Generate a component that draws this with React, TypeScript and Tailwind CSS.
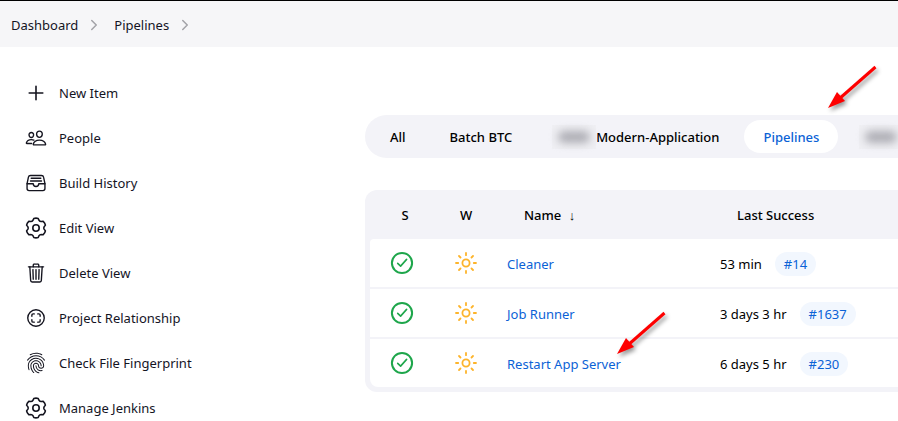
import type { ReactNode } from "react";
import clsx from "clsx";
import {
  IoChevronForward,
  IoFileTrayFullOutline,
  IoFingerPrintOutline,
  IoPeopleOutline,
  IoScanCircleOutline,
  IoTrashOutline,
} from "react-icons/io5";

type IconProps = { className?: string };

function PlusIcon({ className }: IconProps) {
  return (
    <svg viewBox="0 0 22 22" aria-hidden="true" className={className}>
      <path
        d="M11 4.200V17.800M4.200 11H17.800"
        stroke="currentColor"
        strokeWidth="1.600"
        strokeLinecap="round"
      />
    </svg>
  );
}

function GearIcon({ className }: IconProps) {
  return (
    <svg
      viewBox="1 1 22 22"
      aria-hidden="true"
      className={className}
      fill="none"
      stroke="currentColor"
      strokeWidth="1.600"
      strokeLinejoin="round"
    >
      <path d="M9.800 2.500Q12 1.800 14.200 2.500L15 4.300Q15.800 5.500 17.100 5.500L19.200 5.300Q21 6.900 21.400 9.100L20.100 10.900Q19.600 12 20.100 13.100L21.400 14.900Q21 17.100 19.200 18.700L17.100 18.500Q15.800 18.500 15 19.700L14.200 21.500Q12 22.200 9.800 21.500L9 19.700Q8.200 18.500 6.900 18.500L4.800 18.700Q3 17.100 2.600 14.900L3.900 13.100Q4.400 12 3.900 10.900L2.600 9.100Q3 6.900 4.800 5.300L6.900 5.500Q8.200 5.500 9 4.300Z" />
      <circle cx="12" cy="12" r="3.200" />
    </svg>
  );
}

const crumbs = ["Dashboard", "Pipelines"];

const tasks: { label: string; icon: (props: IconProps) => ReactNode }[] = [
  { label: "New Item", icon: PlusIcon },
  { label: "People", icon: IoPeopleOutline },
  { label: "Build History", icon: IoFileTrayFullOutline },
  { label: "Edit View", icon: GearIcon },
  { label: "Delete View", icon: IoTrashOutline },
  { label: "Project Relationship", icon: IoScanCircleOutline },
  { label: "Check File Fingerprint", icon: IoFingerPrintOutline },
  { label: "Manage Jenkins", icon: GearIcon },
];

type Job = { name: string; lastSuccess: string; build: string; marked?: boolean };

const jobs: Job[] = [
  { name: "Cleaner", lastSuccess: "53 min", build: "#14" },
  { name: "Job Runner", lastSuccess: "3 days 3 hr", build: "#1637" },
  { name: "Restart App Server", lastSuccess: "6 days 5 hr", build: "#230", marked: true },
];

function RedArrow({ className }: IconProps) {
  return (
    <svg
      viewBox="0 0 56 52"
      aria-hidden="true"
      className={clsx(
        "pointer-events-none absolute z-10 h-[52px] w-[56px] drop-shadow-[2px_3px_2px_rgba(0,0,0,0.4)]",
        className,
      )}
    >
      <path d="M49.500 3 13 35" stroke="#fe0000" strokeWidth="3" />
      <path d="M2 44 11 28 19 37Z" fill="#fe0000" />
    </svg>
  );
}

/** Blurred-out part of a tab name. */
function Redacted() {
  return (
    <span
      aria-hidden="true"
      className="-ml-1 flex h-6 w-11 shrink-0 items-center justify-center bg-[#efeff3]"
    >
      <span className="h-3 w-8 rounded-full bg-[#adadb4] blur-[4px]" />
    </span>
  );
}

function SuccessIcon() {
  return (
    <svg
      viewBox="0 0 24 24"
      role="img"
      aria-label="Success"
      className="mx-auto block size-6 fill-none stroke-[#1ea64b]"
      strokeLinecap="round"
      strokeLinejoin="round"
    >
      <circle cx="12" cy="12" r="10.100" strokeWidth="2" />
      <path d="M7.700 12.400 10.600 15.100 16.600 8.400" strokeWidth="1.600" />
    </svg>
  );
}

function SunIcon() {
  return (
    <svg
      viewBox="0 0 24 24"
      role="img"
      aria-label="Sunny"
      className="mx-auto block size-6 fill-none stroke-[#fdb42b]"
      strokeWidth="1.800"
      strokeLinecap="round"
    >
      <circle cx="12" cy="12" r="3.600" />
      <path d="M12 2V4.200M12 19.800V22M2 12H4.200M19.800 12H22M5 5 6.500 6.500M17.500 17.500 19 19M5 19 6.500 17.500M17.500 6.500 19 5" />
    </svg>
  );
}

function Breadcrumbs() {
  return (
    <nav
      aria-label="Breadcrumb"
      className="flex h-[47px] items-center border-t border-black bg-[#f6f6f8] px-[11px] pt-px"
    >
      {crumbs.map((crumb) => (
        <span key={crumb} className="flex items-center">
          <a href="#">{crumb}</a>
          <IoChevronForward className="mr-3 ml-2 size-4 text-[#a3a3a8]" />
        </span>
      ))}
    </nav>
  );
}

function SidePanel() {
  return (
    <aside className="w-[365px] shrink-0 pt-[23px] pl-[25px]">
      {tasks.map(({ label, icon: Icon }) => (
        <a key={label} href="#" className="flex h-[45px] items-center gap-3">
          <Icon className="size-[22px]" />
          {label}
        </a>
      ))}
    </aside>
  );
}

function ViewTabs() {
  const tab = "flex h-[33px] shrink-0 items-center rounded-full px-[19px]";
  return (
    <nav
      aria-label="Views"
      className="flex h-[43px] items-center gap-[6px] rounded-l-full bg-[#f3f3f8] pl-[6px] font-medium text-black"
    >
      <a href="#" className={tab}>All</a>
      <a href="#" className={tab}>Batch BTC</a>
      <a href="#" className={tab}>
        <Redacted />
        Modern-Application
      </a>
      <div className="relative">
        <a href="#" aria-current="page" className={clsx(tab, "bg-white text-[#0b62d6]")}>
          Pipelines
        </a>
        <RedArrow className="-top-[56px] left-[82px]" />
      </div>
      <a href="#" aria-label="Hidden view" className={tab}>
        <Redacted />
      </a>
    </nav>
  );
}

function JobTable() {
  return (
    <div className="mt-8 rounded-l-[12px] bg-[#f3f3f8] pb-[5px] pl-[5px]">
      <table className="w-full table-fixed border-separate border-spacing-0 text-left">
        <thead className="text-black">
          <tr className="h-[49px]">
            <th className="w-[64px] pl-[6px] text-center font-medium">S</th>
            <th className="w-[64px] text-center font-medium">W</th>
            <th className="w-[213px] pl-[26px] font-medium">
              Name <span className="ml-1">↓</span>
            </th>
            <th className="pl-[26px] font-medium">Last Success</th>
          </tr>
        </thead>
        <tbody className="[&_td]:border-b-2 [&_td]:border-[#f3f3f8] [&_td]:bg-white [&>tr:first-child>td:first-child]:rounded-tl [&>tr:last-child>td:first-child]:rounded-bl-lg [&>tr:last-child>td]:border-b-0">
          {jobs.map((job) => (
            <tr key={job.name} className="h-[50px] last:h-12">
              <td>
                <SuccessIcon />
              </td>
              <td>
                <SunIcon />
              </td>
              <td className="pt-px pl-[9px]">
                <span className="relative inline-block">
                  <a href="#" className="text-[#0b62d6]">{job.name}</a>
                  {job.marked && <RedArrow className="-top-[44px] right-[-50px]" />}
                </span>
              </td>
              <td className="pt-px pl-[9px]">
                <span className="flex items-center gap-[13px] text-black">
                  {job.lastSuccess}
                  <a
                    href="#"
                    className="flex h-6 items-center rounded-full bg-[#f2f7fe] px-[9px] text-[#0b62d6]"
                  >
                    {job.build}
                  </a>
                </span>
              </td>
            </tr>
          ))}
        </tbody>
      </table>
    </div>
  );
}

export default function App() {
  return (
    <div className="min-h-screen overflow-hidden bg-white font-['Noto_Sans','Open_Sans',sans-serif] text-[13px] leading-5 text-[#14141f]">
      <Breadcrumbs />
      <div className="flex">
        <SidePanel />
        <main className="min-w-0 flex-1 pt-[68px]">
          <ViewTabs />
          <JobTable />
        </main>
      </div>
    </div>
  );
}
